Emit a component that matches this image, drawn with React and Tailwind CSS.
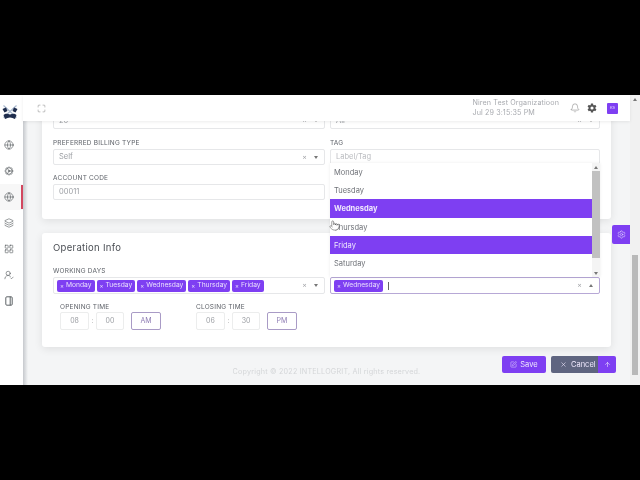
import React from "react";
import { Globe, Cog, Layers, LayoutGrid, UserRoundCheck, Maximize, Bell, SquarePen, X, ArrowUp, Pointer, Settings } from "lucide-react";
import { IoSettingsSharp } from "react-icons/io5";

const labelCls = "h-[11px] mb-px text-[6.5px] leading-[12px] tracking-[0.2px] text-[#5b5f66] uppercase";
const inputCls = "flex items-center bg-white border border-[#e6e7e9] rounded-[2px] pl-[5px] pr-[4px] text-[7.5px] text-[#9a9da2]";

function Caret({ up }) {
  return (
    <span className={`w-0 h-0 border-x-[2.5px] border-x-transparent ${up ? "border-b-[3px] border-b-[#777]" : "border-t-[3px] border-t-[#777]"}`} />
  );
}

function Controls({ up }) {
  return (
    <span className="ml-auto flex items-center gap-[7px] pr-[2px] text-[7px] text-[#a5a7ab]">
      <span>×</span>
      <Caret up={up} />
    </span>
  );
}

function Tag({ children }) {
  return (
    <span className="h-[12px] flex items-center gap-[2px] rounded-[2px] bg-[#7e3ff2] px-[3px] text-[6.7px] text-[#eadffd] whitespace-nowrap">
      <span className="text-[6px]">×</span>
      {children}
    </span>
  );
}

function Option({ children, active }) {
  return (
    <div className={`h-[18.2px] flex items-center pl-[4px] pt-px text-[7.5px] ${active ? "bg-[#7e3ff2] text-[#efe8fd]" : "text-[#6f7278]"} ${children === "Wednesday" ? "font-bold" : ""}`}>
      {children}
    </div>
  );
}

function TimeBox({ children, narrow }) {
  return (
    <span className={`${narrow ? "w-[28px]" : "w-[29px]"} h-[18px] flex items-center justify-center border border-[#eceded] rounded-[2px] text-[7px] text-[#9a9da2]`}>
      {children}
    </span>
  );
}

function TimeGroup({ label, h, m, ap, className }) {
  return (
    <div className={className}>
      <div className="h-[11px] text-[6.5px] leading-[13px] tracking-[0.2px] text-[#5b5f66] uppercase">{label}</div>
      <div className="flex items-center">
        <TimeBox>{h}</TimeBox>
        <span className="w-[7px] text-center text-[7px] text-[#aaa]">:</span>
        <TimeBox narrow>{m}</TimeBox>
        <span className="ml-[7px] w-[30px] h-[18px] flex items-center justify-center border border-[#a99bc6] rounded-[2px] text-[7px] text-[#8d7bb3]">
          {ap}
        </span>
      </div>
    </div>
  );
}

function SideIcon({ Icon, active }) {
  return (
    <div className={`relative h-[26px] flex items-center pl-[4px] ${active ? "bg-[#f7f7f7]" : ""}`}>
      <Icon size={10} strokeWidth={1.4} className="text-[#4d5257]" />
      {active && <span className="absolute right-0 top-[1px] w-[2.5px] h-[24px] bg-[#d2475f]" />}
    </div>
  );
}

function BookIcon({ size, className }) {
  return (
    <svg width={size} height={size} viewBox="0 0 10 10" fill="none" stroke="currentColor" strokeWidth="0.9" className={className}>
      <rect x="1.8" y="0.8" width="6.4" height="8.4" rx="1" />
      <path d="M6.2 0.8 V9.2" />
    </svg>
  );
}

export default function App() {
  return (
    <div className="w-[640px] h-[480px] bg-black flex flex-col pt-[95px] overflow-hidden" style={{ fontFamily: "Inter, 'Open Sans', sans-serif" }}>
      <div className="h-[290px] flex bg-[#f4f5f6] blur-[0.35px]">
        {/* sidebar */}
        <aside className="w-[23px] bg-white flex flex-col shrink-0">
          <div className="h-[37px] flex items-center pl-[2px] pb-[2px]">
            <svg width="16" height="15" viewBox="0 0 16 15">
              <path d="M1.5 0.5 L14.5 12.5 M14.5 0.5 L1.5 12.5" stroke="#a9b9cf" strokeWidth="1.2" />
              <path d="M0.5 4 L4 2.5 L5.5 6 L2.5 7.5 Z M15.5 4 L12 2.5 L10.5 6 L13.5 7.5 Z" fill="#1f2d4d" />
              <path d="M1.5 10 C3.5 8 5.5 8.5 8 9.5 C10.5 8.5 12.5 8 14.5 10 L13 14 C11 13.5 10 12.5 8 12.5 C6 12.5 5 13.5 3 14 Z" fill="#1f2d4d" />
            </svg>
          </div>
          <SideIcon Icon={Globe} />
          <SideIcon Icon={Cog} />
          <SideIcon Icon={Globe} active />
          <SideIcon Icon={Layers} />
          <SideIcon Icon={LayoutGrid} />
          <SideIcon Icon={UserRoundCheck} />
          <SideIcon Icon={BookIcon} />
        </aside>

        {/* main */}
        <main className="relative w-[607px] flex flex-col shrink-0">
          <header className="relative z-10 h-[26px] shrink-0 bg-white shadow-[0_1px_3px_rgba(0,0,0,0.08)] flex items-center pl-[14px] pr-[12px]">
            <Maximize size={9} strokeWidth={1} className="text-[#555]" />
            <div className="ml-auto text-[7.2px] leading-[10px] tracking-[0.1px] text-[#a9abb0] whitespace-nowrap">
              <div>Niren Test Organizatioon</div>
              <div>Jul 29 3:15:35 PM</div>
            </div>
            <Bell size={10} strokeWidth={1.1} className="ml-[11px] text-[#666]" />
            <IoSettingsSharp size={10} className="ml-[7px] text-[#555]" />
            <span className="ml-[10px] w-[11px] h-[11px] rounded-[1px] bg-[#7e3ff2] flex items-center justify-center text-[4px] text-[#e7dcfc]">KS</span>
          </header>

          <div className="flex-1 flex min-h-0 overflow-hidden">
            <div className="w-[5px] shrink-0 bg-gradient-to-r from-[#c6c9cd] to-[#f4f5f6]" />
            <div className="w-[569px] ml-[14px] shrink-0">
              {/* card 1 */}
              <section className="-mt-[9px] bg-white rounded-b-[3px] shadow-[0_2px_8px_rgba(0,0,0,0.09)] pl-[11px] pr-[11px] pb-[19px]">
                <div className="grid grid-cols-[272px_270px] gap-x-[5px]">
                  <div className={`${inputCls} h-[17px]`}>20<Controls /></div>
                  <div className={`${inputCls} h-[17px]`}>All<Controls /></div>
                  <div className="mt-[8px]">
                    <div className={labelCls}>Preferred Billing Type</div>
                    <div className={`${inputCls} h-[16px]`}>Self<Controls /></div>
                  </div>
                  <div className="mt-[8px]">
                    <div className={labelCls}>Tag</div>
                    <div className={`${inputCls} h-[16px] text-[#b9bbbf]`}>Label/Tag</div>
                  </div>
                  <div className="mt-[7px]">
                    <div className={labelCls}>Account Code</div>
                    <div className={`${inputCls} h-[16px]`}>00011</div>
                  </div>
                </div>
              </section>

              {/* card 2 */}
              <section className="mt-[14px] bg-white rounded-[3px] shadow-[0_2px_8px_rgba(0,0,0,0.09)] pt-[7px] pl-[11px] pr-[11px] pb-[17px]">
                <h2 className="h-[16px] text-[9.5px] leading-[16px] tracking-[0.3px] text-[#4a4e54]">Operation Info</h2>
                <div className="mt-[10px] h-[11px] text-[6.5px] leading-[11px] tracking-[0.2px] text-[#5b5f66] uppercase">Working Days</div>
                <div className="grid grid-cols-[272px_270px] gap-x-[5px]">
                  <div className="h-[17px] flex items-center gap-[2px] bg-white border border-[#e6e7e9] rounded-[2px] pl-[3px] pr-[4px]">
                    <Tag>Monday</Tag>
                    <Tag>Tuesday</Tag>
                    <Tag>Wednesday</Tag>
                    <Tag>Thursday</Tag>
                    <Tag>Friday</Tag>
                    <Controls />
                  </div>
                  <div className="relative h-[17px] flex items-center bg-white border border-[#b7a8d6] rounded-[2px] pl-[3px] pr-[4px]">
                    <Tag>Wednesday</Tag>
                    <span className="ml-[5px] w-px h-[8px] bg-[#666]" />
                    <Controls up />
                    {/* open dropdown */}
                    <div className="absolute z-20 -left-px bottom-[calc(100%+1px)] w-[270px] h-[114px] bg-white flex shadow-[0_0_3px_rgba(0,0,0,0.08)]">
                      <div className="flex-1">
                        <Option>Monday</Option>
                        <Option>Tuesday</Option>
                        <Option active>Wednesday</Option>
                        <Option>Thursday</Option>
                        <Option active>Friday</Option>
                        <Option>Saturday</Option>
                      </div>
                      <div className="w-[8px] bg-[#f4f4f4] flex flex-col items-center">
                        <div className="h-[8px] flex items-center"><Caret up /></div>
                        <div className="w-full h-[87px] bg-[#c1c1c1]" />
                        <div className="flex-1 flex items-end pb-[2px]"><Caret /></div>
                      </div>
                      <Pointer size={11} strokeWidth={1} fill="#fff" className="absolute left-[-1px] top-[57px] text-[#333]" />
                    </div>
                  </div>
                </div>
                <div className="mt-[7px] ml-[7px] flex">
                  <TimeGroup label="Opening Time" h="08" m="00" ap="AM" />
                  <TimeGroup label="Closing Time" h="06" m="30" ap="PM" className="ml-[35px]" />
                </div>
              </section>

              <footer className="mt-[19px] h-[12px] text-center text-[7.2px] leading-[12px] tracking-[0.2px] text-[#d4d6d8]">
                Copyright © 2022 INTELLOGRIT, All rights reserved.
              </footer>
            </div>
          </div>

          {/* floating settings tab */}
          <button className="absolute z-10 right-0 top-[130px] w-[18px] h-[19px] bg-[#7e3ff2] rounded-l-[2px] flex items-center justify-center text-[#e4d8fb]">
            <Settings size={9} strokeWidth={1.6} />
          </button>

          {/* action buttons */}
          <div className="absolute z-10 left-[479px] top-[261px] flex items-center text-[7.5px] text-[#efe8fd]">
            <button className="w-[44px] h-[17px] bg-[#7e3ff2] rounded-[2px] flex items-center justify-center gap-[3px]">
              <SquarePen size={7} strokeWidth={1.6} />Save
            </button>
            <button className="ml-[5px] w-[47px] h-[17px] bg-[#5f6580] rounded-l-[2px] flex items-center pl-[9px] gap-[4px]">
              <X size={7} strokeWidth={2} />Cancel
            </button>
            <button className="w-[18px] h-[17px] bg-[#7e3ff2] rounded-r-[2px] flex items-center justify-center">
              <ArrowUp size={7} strokeWidth={2} />
            </button>
          </div>
        </main>

        {/* page scrollbar */}
        <div className="w-[10px] shrink-0 bg-[#f1f1f1] flex flex-col items-end pr-[2px]">
          <div className="h-[8px] w-[6px] flex items-center justify-center"><Caret up /></div>
          <div className="h-[152px]" />
          <div className="h-[120px] w-[6px] bg-[#b9b9b9]" />
        </div>
      </div>
    </div>
  );
}
